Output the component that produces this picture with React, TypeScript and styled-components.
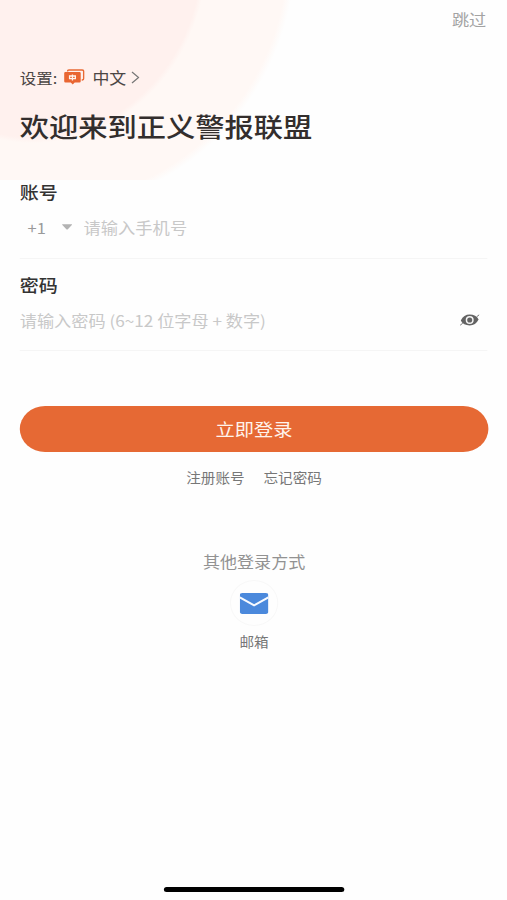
import React from "react";
import styled, { createGlobalStyle } from "styled-components";

const GlobalStyle = createGlobalStyle`
  * { box-sizing: border-box; }
  html, body { margin: 0; padding: 0; background: #fefefe; overflow: hidden; }
  button, input { font: inherit; border: 0; background: none; padding: 0; margin: 0; outline: 0; }
`;

/* The layout is 461px wide and rendered with a 1.1 horizontal stretch. */
const Screen = styled.main`
  width: 461px;
  height: 900px;
  padding: 0 17px 0 18px;
  display: flex;
  flex-direction: column;
  transform: scaleX(1.1);
  transform-origin: 0 0;
  font-family: "Noto Sans CJK SC", "Noto Sans", sans-serif;
  color: #333;
  background:
    radial-gradient(ellipse 158px 188px at 30px -45px, #fff1ee 97%, transparent 100%) 0 0 / 100% 180px no-repeat,
    radial-gradient(ellipse 236px 257px at 32px -45px, #fff8f5 97%, transparent 100%) 0 0 / 100% 180px no-repeat,
    #fefefe;
`;

const TopBar = styled.header`
  height: 40px;
  display: flex;
  justify-content: flex-end;
  padding-right: 2px;
`;

const Skip = styled.button`
  height: 38px;
  line-height: 38px;
  font-size: 15.6px;
  color: #a3a3a3;
`;

const Language = styled.div`
  height: 28px;
  margin-top: 23px;
  display: flex;
  align-items: center;
  font-size: 15.4px;
  color: #4b4644;
`;

const LanguagePrefix = styled.span`
  width: 40px;
  font-size: 15px;
`;

const LanguageName = styled.span`
  margin: 0 4px 0 7px;
`;

const Title = styled.h1`
  height: 44px;
  margin: 13px 0 0;
  line-height: 44px;
  font-size: 26.6px;
  font-weight: 500;
  white-space: nowrap;
  color: #332e2d;
`;

const Field = styled.section<{ $gap: number; $height: number }>`
  height: ${(p) => p.$height}px;
  margin-top: ${(p) => p.$gap}px;
  margin-right: 1px;
  border-bottom: 1px solid #f5f5f5;
`;

const Label = styled.label`
  display: block;
  height: 26px;
  line-height: 26px;
  font-size: 17.3px;
  font-weight: 500;
  color: #333;
`;

const InputRow = styled.div`
  height: 44px;
  display: flex;
  align-items: center;
`;

const CountryCode = styled.div`
  width: 58px;
  padding-left: 7px;
  display: flex;
  align-items: center;
  gap: 14px;
  font-size: 15px;
  color: #9a9a9a;
`;

const Input = styled.input`
  flex: 1;
  min-width: 0;
  height: 30px;
  font-size: 15.7px;
  &::placeholder { color: #c8c8c8; opacity: 1; }
`;

const PasswordInput = styled(Input)`
  font-size: 15.6px;
`;

const EyeButton = styled.button`
  height: 20px;
  display: flex;
  align-items: center;
  margin-right: 7px;
`;

const Login = styled.button`
  height: 46px;
  margin-top: 55px;
  flex: none;
  border-radius: 23px;
  line-height: 46px;
  font-size: 17.5px;
  color: #fff3ec;
  background: #e66934;
`;

const Links = styled.nav`
  height: 28px;
  margin-top: 11px;
  display: flex;
  justify-content: center;
  align-items: center;
  gap: 17px;
  font-size: 13.3px;
  color: #777;
`;

const Other = styled.section`
  margin-top: 56px;
  display: flex;
  flex-direction: column;
  align-items: center;
`;

const OtherTitle = styled.div`
  height: 28px;
  line-height: 28px;
  font-size: 15.5px;
  color: #929292;
`;

const MailCircle = styled.button`
  width: 44px;
  height: 46px;
  margin-top: 5px;
  border-radius: 50%;
  border: 1px solid #f8f8f8;
  display: flex;
  align-items: center;
  justify-content: center;
`;

const MailLabel = styled.div`
  height: 24px;
  margin-top: 4px;
  line-height: 24px;
  font-size: 13.3px;
  color: #777;
`;

const HomeBar = styled.div`
  width: 164px;
  height: 5px;
  margin: auto auto 8px;
  border-radius: 3px;
  background: #000;
`;

const LanguageIcon = () => (
  <svg width="19" height="16" viewBox="0 0 21 16" preserveAspectRatio="none">
    <path d="M3.8 2.6V2Q3.8 1 5.2 1H18.6Q20 1 20 2.2V9.6Q20 11 18.6 11H18" fill="none" stroke="#e96a35" strokeWidth="1.5" />
    <path d="M1.6 3H15.8Q17 3 17 4.2V12.2Q17 13.4 15.8 13.4H11L9 15.5L7 13.4H1.6Q.4 13.4 .4 12.2V4.2Q.4 3 1.6 3Z" fill="#e96632" />
    <path d="M5.8 7H11.6V9.6H5.8ZM8.7 5.4V11.6" fill="none" stroke="#fff3ed" strokeWidth="1.3" />
  </svg>
);

const Chevron = () => (
  <svg width="8" height="13" viewBox="0 0 8 13">
    <path d="M1 1L7 6.5L1 12" fill="none" stroke="#777" strokeWidth="1.1" />
  </svg>
);

const Caret = () => (
  <svg width="10" height="6" viewBox="0 0 10 6">
    <path d="M.8 .3H9.2Q10 .4 9.3 1.1L5.7 5.2Q5 6 4.3 5.2L.7 1.1Q0 .4 .8 .3Z" fill="#b3b3b3" />
  </svg>
);

const Eye = () => (
  <svg width="18" height="12" viewBox="0 0 20 12" preserveAspectRatio="none">
    <path d="M1 6.5C3 2.5 6 .6 10 .6S17.5 2.2 19 5.5C17 9.5 14 11.4 10 11.4S2.5 9.8 1 6.5Z" fill="#636363" />
    <circle cx="10" cy="6" r="3.3" fill="none" stroke="#f5f5f5" strokeWidth="1.5" />
    <path d="M17 2.8L19.6 .8M3 9.2L.4 11.2" stroke="#777" strokeWidth="1" />
  </svg>
);

const Mail = () => (
  <svg width="26" height="21" viewBox="0 0 26 21">
    <rect width="26" height="21" rx="2.4" fill="#4b89dc" />
    <path d="M0 4.4L13 12.3L26 4.4" fill="none" stroke="#f7faff" strokeWidth="1.9" />
  </svg>
);

export default function App() {
  return (
    <>
      <GlobalStyle />
      <Screen>
        <TopBar>
          <Skip>跳过</Skip>
        </TopBar>
        <Language>
          <LanguagePrefix>设置:</LanguagePrefix>
          <LanguageIcon />
          <LanguageName>中文</LanguageName>
          <Chevron />
        </Language>
        <Title>欢迎来到正义警报联盟</Title>
        <Field $gap={31} $height={80}>
          <Label htmlFor="phone">账号</Label>
          <InputRow>
            <CountryCode>
              +1
              <Caret />
            </CountryCode>
            <Input id="phone" placeholder="请输入手机号" />
          </InputRow>
        </Field>
        <Field $gap={13} $height={79}>
          <Label htmlFor="password">密码</Label>
          <InputRow>
            <PasswordInput id="password" type="password" placeholder="请输入密码 (6~12 位字母 + 数字)" />
            <EyeButton aria-label="显示密码">
              <Eye />
            </EyeButton>
          </InputRow>
        </Field>
        <Login>立即登录</Login>
        <Links>
          <span>注册账号</span>
          <span>忘记密码</span>
        </Links>
        <Other>
          <OtherTitle>其他登录方式</OtherTitle>
          <MailCircle aria-label="邮箱">
            <Mail />
          </MailCircle>
          <MailLabel>邮箱</MailLabel>
        </Other>
        <HomeBar />
      </Screen>
    </>
  );
}
